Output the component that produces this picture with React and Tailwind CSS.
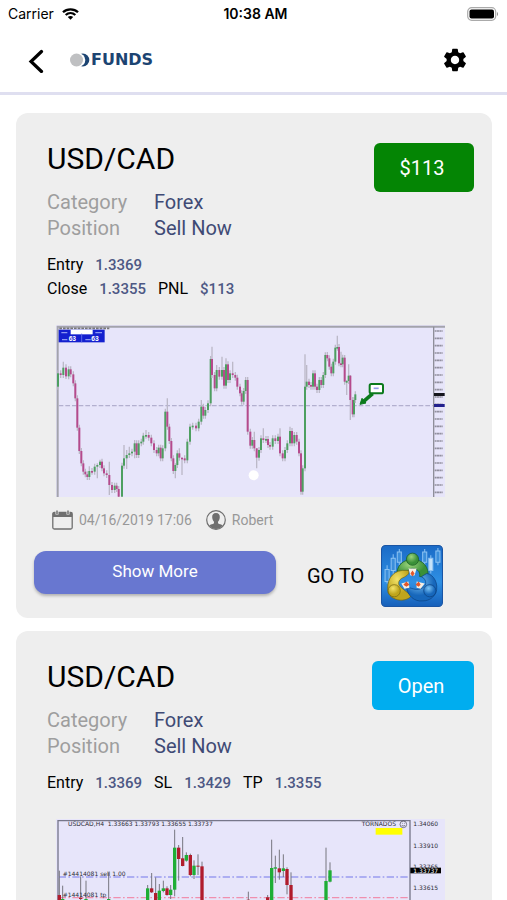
import { MdSettings } from 'react-icons/md';

// [x, close, high?, low?] - y grows downwards, each candle opens at the previous close
const swingSeries = [
  [6, 145], [14, 150], [22, 128, 110], [30, 154, 118, 162], [38, 133], [44, 148], [52, 175], [58, 220], [64, 308],
  [70, 378], [76, 415], [82, 440], [88, 448], [94, 456], [100, 438, 424], [108, 440], [116, 425], [124, 420, 415, 460],
  [132, 410, 404], [138, 430], [144, 445], [152, 450], [160, 480, 410, 510], [168, 495], [176, 482], [182, 492],
  [188, 515], [198, 422], [204, 400, 360], [212, 390, 375, 432], [220, 385, 365], [228, 380], [236, 355, 345, 400],
  [242, 390], [248, 355], [256, 350], [262, 332], [270, 330, 315], [278, 338], [286, 355], [294, 375], [302, 385],
  [308, 368], [314, 400], [320, 370], [328, 260], [334, 305, 220], [340, 348], [346, 400], [352, 438],
  [358, 420, 415, 460], [364, 385], [370, 398, 370], [378, 400, 398, 450], [386, 406], [394, 350], [402, 305],
  [410, 302], [420, 310], [428, 290], [436, 245, 225], [442, 272], [448, 255], [456, 235], [464, 102],
  [468, 150, 65], [476, 190], [482, 135, 120], [490, 155], [498, 135, 95], [504, 182], [510, 118, 100], [516, 165],
  [522, 145], [530, 150, 110], [538, 158], [544, 185], [552, 205], [557, 230], [563, 198], [569, 165], [575, 320],
  [583, 362], [589, 345], [595, 370, 320], [602, 398, 370, 430], [609, 375], [615, 340], [622, 345, 310],
  [630, 342], [636, 360], [642, 365], [650, 340], [658, 348], [666, 335], [672, 385, 310], [680, 400], [687, 375],
  [694, 355], [702, 318, 305], [708, 355], [715, 330], [722, 350], [729, 385], [735, 500], [740, 430], [747, 185, 88],
  [752, 170, 120], [759, 180], [765, 185], [771, 145], [777, 185], [783, 195], [790, 165], [796, 180], [802, 150],
  [808, 90, 82], [814, 100], [820, 125], [826, 145], [832, 110], [838, 68], [844, 66, 32], [849, 115],
  [855, 118, 80], [860, 98], [866, 170, 90], [872, 168, 165, 210], [878, 152, 118], [883, 225, 150, 285],
  [890, 268], [894, 225], [898, 208],
];

// [x, top, bottom, wickTop, wickBottom, up]
const openCandles = [
  [10, 228, 330, 155, 340, false], [20, 240, 246, 200, 280, true], [74, 236, 240, 172, 280, false],
  [90, 240, 246, 185, 280, true], [158, 240, 246, 160, 280, true], [275, 208, 330, 198, 330, true],
  [287, 208, 220, 162, 222, false], [299, 222, 330, 175, 330, false], [310, 215, 330, 195, 330, true],
  [322, 208, 216, 185, 220, true], [333, 208, 228, 202, 230, false], [344, 212, 228, 198, 240, true],
  [356, 86, 212, 32, 232, true], [368, 86, 120, 78, 185, false], [380, 118, 141, 54, 142, false],
  [391, 108, 125, 100, 128, true], [403, 108, 168, 104, 172, false], [414, 140, 168, 124, 180, true],
  [426, 140, 143, 106, 168, false], [438, 142, 330, 128, 340, false], [577, 242, 280, 218, 290, false],
  [635, 235, 260, 228, 290, false], [647, 147, 330, 62, 330, true], [658, 145, 149, 110, 192, true],
  [670, 148, 160, 92, 182, false], [682, 148, 156, 106, 174, true], [693, 150, 198, 145, 226, false],
  [705, 198, 330, 160, 330, false], [810, 186, 330, 86, 330, true], [822, 154, 188, 130, 190, true],
];

function SwingChart() {
  return (
    <svg viewBox="0 0 1167 516" className="block w-full" role="img" aria-label="USD/CAD price history">
      <rect width="1167" height="516" fill="#e7e5fa" />
      <path d="M5 516V5H1167" fill="none" stroke="#a3a3ac" strokeWidth="6" />
      <path d="M10 10H160" stroke="#777" strokeWidth="5" strokeDasharray="8 3" />
      <rect x="8" y="14" width="138" height="38" fill="#1420cf" />
      <rect x="44" y="14" width="66" height="14" fill="#fff" />
      <path d="M77 26V52" stroke="#5866e8" strokeWidth="3" />
      <g fill="#fff" fontFamily="Liberation Sans" fontSize="20" fontWeight="bold">
        <text x="38" y="49">63</text>
        <text x="106" y="49">63</text>
      </g>
      <path d="M16 23H34M118 23H138M18 44H34M88 44H104" stroke="#8d98f0" strokeWidth="4" />
      <path d="M8 242H1130" stroke="#b3b0cf" strokeWidth="4" strokeDasharray="14 6" />
      {swingSeries.map(([x, close, high, low], i) => {
        const open = i ? swingSeries[i - 1][1] : 185;
        const top = Math.min(open, close);
        const bottom = Math.max(open, close);
        return (
          <g key={x}>
            <path
              d={`M${x} ${high ?? top - 9}V${low ?? bottom + 9}`}
              stroke="#bcb9c8"
              strokeWidth="4"
            />
            <rect
              x={x - 3}
              y={top}
              width="6"
              height={Math.max(bottom - top, 5)}
              fill={close < open ? '#4d9f60' : '#b54a8c'}
            />
          </g>
        );
      })}
      <path d="M950 206L922 230" stroke="#0b7a1c" strokeWidth="11" />
      <path d="M912 238L918 220L930 234Z" fill="#0b7a1c" stroke="#0b7a1c" strokeWidth="3" />
      <rect x="941" y="177" width="40" height="28" rx="5" fill="#fff" stroke="#0b7a1c" strokeWidth="6" />
      <path d="M953 190H968" stroke="#8f9ae8" strokeWidth="5" />
      <path d="M1133 5V516" stroke="#8e8e99" strokeWidth="4" />
      {Array.from({ length: 23 }, (_, i) => (
        <path key={i} d={`M1136 ${18 + i * 22}H1160`} stroke="#92909f" strokeWidth="5" strokeDasharray="6 1" />
      ))}
      <rect x="1134" y="204" width="32" height="9" fill="#15151c" />
      <rect x="1134" y="237" width="32" height="9" fill="#22208c" />
      <circle cx="593" cy="451" r="15" fill="#fff" />
    </svg>
  );
}

function OpenChart() {
  return (
    <svg viewBox="0 0 1167 516" className="block w-full" role="img" aria-label="USD/CAD open position">
      <rect width="1167" height="516" fill="#e7e5fa" />
      <path d="M6 516V5H1062V516" fill="none" stroke="#77778a" strokeWidth="4" />
      <path d="M8 174H1060" stroke="#9b9cf0" strokeWidth="4" strokeDasharray="22 7 5 7" />
      <path d="M8 236H1060" stroke="#f08fae" strokeWidth="4" strokeDasharray="22 7 5 7" />
      {openCandles.map(([x, top, bottom, wickTop, wickBottom, up]) => (
        <g key={x}>
          <path d={`M${x} ${wickTop}V${wickBottom}`} stroke="#77767f" strokeWidth="3" />
          <rect x={x - 5} y={top} width="10" height={bottom - top} fill={up ? '#1fae35' : '#b01c2c'} />
        </g>
      ))}
      <g fill="#2d2d38" fontFamily="DejaVu Sans" fontSize="18">
        <text x="36" y="21">USDCAD,H4&#160; 1.33663 1.33793 1.33655 1.33737</text>
        <text x="20" y="172">#14414081 sell 1.00</text>
        <text x="20" y="234">#14414081 tp</text>
        <text x="917" y="22">TORNADOS</text>
        <text x="1072" y="20">1.34060</text>
        <text x="1072" y="86">1.33910</text>
        <text x="1072" y="150">1.33765</text>
        <text x="1072" y="214">1.33615</text>
      </g>
      <circle cx="1042" cy="16" r="10" fill="none" stroke="#44444f" strokeWidth="2" />
      <path d="M1037 18C1039 22 1045 22 1047 18M1038 13H1040M1044 13H1046" fill="none" stroke="#44444f" strokeWidth="2" />
      <rect x="959" y="27" width="80" height="20" fill="#ff0" />
      <rect x="1063" y="146" width="92" height="17" fill="#000" />
      <text x="1072" y="161" fill="#fff" fontFamily="DejaVu Sans" fontSize="18">1.33737</text>
    </svg>
  );
}

function StatusBar() {
  return (
    <div className="grid grid-cols-3 items-center h-7 pl-2 pr-2 font-['Inter'] text-sm text-black">
      <div className="flex items-center gap-2">
        <span>Carrier</span>
        <svg viewBox="0 0 17 12" className="w-[17px] h-3" fill="none" stroke="#000" strokeWidth="2.3">
          <path d="M1 4.2C5 .3 12 .3 16 4.2M3.7 7C6.5 4.4 10.500 4.400 13.300 7" />
          <path d="M8.500 11.800L5.800 9C7.300 7.700 9.700 7.700 11.200 9Z" fill="#000" stroke="none" />
        </svg>
      </div>
      <span className="pl-1 text-center font-semibold whitespace-nowrap">10:38 AM</span>
      <svg viewBox="0 0 32 14" className="w-8 h-[14px] justify-self-end">
        <rect x=".7" y=".7" width="28" height="12.600" rx="4" fill="#fff" stroke="#aaa" strokeWidth="1.200" />
        <rect x="2.500" y="2.500" width="24.500" height="9" rx="2" />
        <path d="M30 5V9C31.300 8.500 31.300 5.500 30 5Z" fill="#888" />
      </svg>
    </div>
  );
}

function Header() {
  return (
    <header className="flex items-center h-[67px] pl-7 pr-[38px] border-b-3 border-[#dfdff0]">
      <button type="button" aria-label="Back" className="w-4 h-6 mt-[2px]">
        <svg viewBox="0 0 16 24" className="w-4 h-6" fill="none" stroke="#000" strokeWidth="3.200">
          <path d="M13.500 2.500L3 12.500L13.500 22.500" strokeLinecap="round" />
        </svg>
      </button>
      <a href="#" className="flex items-center ml-[26px] -mt-px">
        <svg viewBox="0 0 21 14" className="w-[21px] h-[14px]">
          <circle cx="12.800" cy="7" r="6.500" fill="#1c4472" />
          <circle cx="8.500" cy="7" r="6.800" fill="#fff" />
          <circle cx="6.500" cy="7" r="6.500" fill="#bfc0c2" />
        </svg>
        <span className="font-['DejaVu_Sans'] font-bold text-base leading-4 text-[#1c4472]">FUNDS</span>
      </a>
      <button type="button" aria-label="Settings" className="ml-auto">
        <MdSettings size={28} />
      </button>
    </header>
  );
}

function CalendarIcon() {
  return (
    <svg viewBox="0 0 21 20" className="w-[21px] h-5" fill="none" stroke="#6f6f6f">
      <rect x=".8" y="2.500" width="19.400" height="16.500" rx="1.500" strokeWidth="1.300" />
      <path d="M.8 2.500H20.200V7H.8Z" fill="#6f6f6f" stroke="none" />
      <path d="M5 0V4.500M16 0V4.500" stroke="#eee" strokeWidth="3" />
      <path d="M5 .5V4M16 .5V4" strokeWidth="1.500" />
    </svg>
  );
}

function PersonIcon() {
  return (
    <svg viewBox="0 0 20 20" className="w-5 h-5">
      <circle cx="10" cy="10" r="9.300" fill="none" stroke="#6f6f6f" strokeWidth="1.200" />
      <path
        d="M10 3C7.300 3 6 4.800 6.200 7.300C6.300 9.500 7.200 11 8 11.800V13.300C6.800 14.300 4.500 14.500 3.200 15.500C5 18 7.300 19 10 19S15 18 16.800 15.500C15.500 14.500 13.200 14.300 12 13.300V11.800C12.800 11 13.700 9.500 13.800 7.300C14 4.800 12.700 3 10 3Z"
        fill="#6f6f6f"
      />
    </svg>
  );
}

function TraderLogo() {
  return (
    <svg viewBox="0 0 61 61" className="w-full h-full">
      <defs>
        <linearGradient id="sky" x2="0" y2="1">
          <stop stopColor="#1a6ac6" />
          <stop offset=".6" stopColor="#2f90e4" />
          <stop offset="1" stopColor="#165fb9" />
        </linearGradient>
        <radialGradient id="green" cx=".4" cy=".3">
          <stop stopColor="#9ad47c" />
          <stop offset="1" stopColor="#3a9038" />
        </radialGradient>
        <radialGradient id="gold" cx=".4" cy=".3">
          <stop stopColor="#f3e36a" />
          <stop offset="1" stopColor="#bfa51c" />
        </radialGradient>
        <radialGradient id="blue" cx=".4" cy=".3">
          <stop stopColor="#7cc4f5" />
          <stop offset="1" stopColor="#1767bb" />
        </radialGradient>
      </defs>
      <rect x=".5" y=".5" width="60" height="60" rx="4" fill="url(#sky)" stroke="#1a55a4" />
      <g stroke="#8cc2f2" strokeWidth="1" fill="none">
        <path d="M6 20V38M12 9V29M18 4V20M43 4V20M49 10V28M56 3V20" />
        <path d="M4 24H8V36H4ZM10 13H14V25H10ZM16 7H20V17H16ZM41 7H45V17H41ZM54 6H58V17H54Z" fill="#3b8edb" />
        <path d="M47 13H51V25H47Z" fill="#c6e1f8" />
      </g>
      <g strokeWidth=".7">
        <path d="M16 31C14 21 22 14 31 14C41 14 48 22 46 32L38 31C39 26 35 23 31 23C27 23 25 26 25 29Z" fill="url(#green)" stroke="#185c20" />
        <path d="M7 47C5 36 10 26 21 25L27 25C29 29 24 31 20 33C16 36 17 40 20 42L30 50C24 57 11 55 7 47Z" fill="url(#gold)" stroke="#786710" />
        <path d="M54 47C57 38 52 29 45 28L40 31C46 35 45 41 39 43C34 45 29 42 25 41C26 50 33 56 41 55C48 55 52 51 54 47Z" fill="url(#blue)" stroke="#0b4283" />
        <circle cx="31" cy="14" r="6" fill="url(#green)" stroke="#185c20" />
        <circle cx="13" cy="45" r="6" fill="url(#gold)" stroke="#786710" />
        <circle cx="48" cy="45" r="6" fill="url(#blue)" stroke="#0b4283" />
      </g>
      <path d="M27 23H35L33 30H29ZM20 38L27 36L28 42L23 43ZM35 36L43 38L39 43L35 42Z" fill="#f4eee3" />
      <path d="M31 25L33 28L31 31L29 28ZM25 36L28 39L25 41L22 39ZM37 36L39 39L37 41L34 39Z" fill="#e2572b" />
    </svg>
  );
}

function TradeCard({ pair, category, position, levels, badge, badgeClass, chart, children }) {
  return (
    <article className="bg-[#eee] rounded-xl rounded-br-none pt-[30px] pb-[11px]">
      <div className="flex justify-between items-start pl-[31px] pr-[18px]">
        <div>
          <h2 className="text-3xl leading-8">{pair}</h2>
          <dl className="grid grid-cols-[107px_auto] mt-[14px] text-xl leading-[26px] text-[#3f4a75]">
            <dt className="text-[#9e9e9e]">Category</dt>
            <dd>{category}</dd>
            <dt className="text-[#9e9e9e]">Position</dt>
            <dd>{position}</dd>
          </dl>
        </div>
        <button type="button" className={`h-[49px] rounded-md text-xl text-white ${badgeClass}`}>
          {badge}
        </button>
      </div>
      <div className="pl-[31px] mt-3">
        {levels.map((row) => (
          <dl key={row[0][0]} className="flex gap-3 leading-6">
            {row.map(([label, value]) => (
              <div key={label} className="flex gap-3">
                <dt className="text-base">{label}</dt>
                <dd className="text-[15px] leading-6 font-medium text-[#4d5884]">{value}</dd>
              </div>
            ))}
          </dl>
        ))}
      </div>
      <div className="mt-6 ml-10 mr-[47px]">{chart}</div>
      {children}
    </article>
  );
}

function CardFooter({ date, author }) {
  return (
    <>
      <div className="flex items-center h-5 mt-[13px] pl-9 text-sm text-[#989898]">
        <CalendarIcon />
        <time className="ml-[6px]">{date}</time>
        <span className="ml-[14px]">
          <PersonIcon />
        </span>
        <span className="ml-[6px]">{author}</span>
      </div>
      <div className="flex items-center mt-[15px] pl-[18px]">
        <button
          type="button"
          className="w-[242px] h-[43px] -mt-2 rounded-xl bg-[#6877d0] text-[17px] text-white shadow-[0_2px_3px_rgba(0,0,0,0.25)]"
        >
          Show More
        </button>
        <span className="ml-[31px] text-xl">GO TO</span>
        <a href="#" aria-label="Trading terminal" className="ml-[17px] w-[62px] h-[62px]">
          <TraderLogo />
        </a>
      </div>
    </>
  );
}

export default function App() {
  return (
    <div className="flex flex-col h-screen bg-white text-black font-['Roboto',sans-serif]">
      <StatusBar />
      <Header />
      <main className="flex-1 min-h-0 overflow-y-auto [scrollbar-width:none] pt-[18px] pl-4 pr-[15px] space-y-[13px]">
        <TradeCard
          pair="USD/CAD"
          category="Forex"
          position="Sell Now"
          badge="$113"
          badgeClass="w-[100px] pr-1 bg-[#048504]"
          levels={[[['Entry', '1.3369']], [['Close', '1.3355'], ['PNL', '$113']]]}
          chart={<SwingChart />}
        >
          <CardFooter date="04/16/2019 17:06" author="Robert" />
        </TradeCard>
        <TradeCard
          pair="USD/CAD"
          category="Forex"
          position="Sell Now"
          badge="Open"
          badgeClass="w-[102px] pr-1 bg-[#00adef]"
          levels={[[['Entry', '1.3369'], ['SL', '1.3429'], ['TP', '1.3355']]]}
          chart={<OpenChart />}
        />
      </main>
    </div>
  );
}
